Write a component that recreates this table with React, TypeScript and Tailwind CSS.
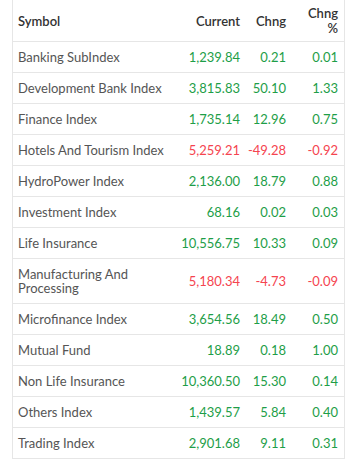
import React from "react";

type Row = { name: string; cur: string; chg: string; pct: string; neg?: boolean };

const rows: Row[] = [
  { name: "Banking SubIndex", cur: "1,239.84", chg: "0.21", pct: "0.01" },
  { name: "Development Bank Index", cur: "3,815.83", chg: "50.10", pct: "1.33" },
  { name: "Finance Index", cur: "1,735.14", chg: "12.96", pct: "0.75" },
  { name: "Hotels And Tourism Index", cur: "5,259.21", chg: "-49.28", pct: "-0.92", neg: true },
  { name: "HydroPower Index", cur: "2,136.00", chg: "18.79", pct: "0.88" },
  { name: "Investment Index", cur: "68.16", chg: "0.02", pct: "0.03" },
  { name: "Life Insurance", cur: "10,556.75", chg: "10.33", pct: "0.09" },
  { name: "Manufacturing And Processing", cur: "5,180.34", chg: "-4.73", pct: "-0.09", neg: true },
  { name: "Microfinance Index", cur: "3,654.56", chg: "18.49", pct: "0.50" },
  { name: "Mutual Fund", cur: "18.89", chg: "0.18", pct: "1.00" },
  { name: "Non Life Insurance", cur: "10,360.50", chg: "15.30", pct: "0.14" },
  { name: "Others Index", cur: "1,439.57", chg: "5.84", pct: "0.40" },
  { name: "Trading Index", cur: "2,901.68", chg: "9.11", pct: "0.31" },
];

export default function App() {
  return (
    <div className="w-[360px] h-[466px] bg-white overflow-hidden" style={{ fontFamily: "Lato, 'Open Sans', sans-serif" }}>
      <div className="ml-[12px] w-[333px] border-x border-b border-[#e6e6e6] text-[13px] leading-[14px]">
        <div className="grid grid-cols-[165px_68px_46px_52px] border-b border-[#e6e6e6] h-[42px] items-center font-semibold text-[#333]">
          <div className="pl-[5px]">Symbol</div>
          <div className="text-right pr-[6px]">Current</div>
          <div className="text-right pr-[6px]">Chng</div>
          <div className="text-right pr-[6px] leading-[15px]">
            <div>Chng</div>
            <div>%</div>
          </div>
        </div>
        {rows.map((r, i) => {
          const c = r.neg ? "text-[#f5444f]" : "text-[#1e9e48]";
          return (
            <div
              key={r.name}
              className={`grid grid-cols-[165px_68px_46px_52px] items-center py-[8px] ${i < rows.length - 1 ? "border-b border-[#e6e6e6]" : ""}`}
            >
              <div className="pl-[5px] pr-[6px] text-[#555]">{r.name}</div>
              <div className={`text-right pr-[6px] ${c}`}>{r.cur}</div>
              <div className={`text-right pr-[6px] ${c}`}>{r.chg}</div>
              <div className={`text-right pr-[6px] ${c}`}>{r.pct}</div>
            </div>
          );
        })}
      </div>
    </div>
  );
}
